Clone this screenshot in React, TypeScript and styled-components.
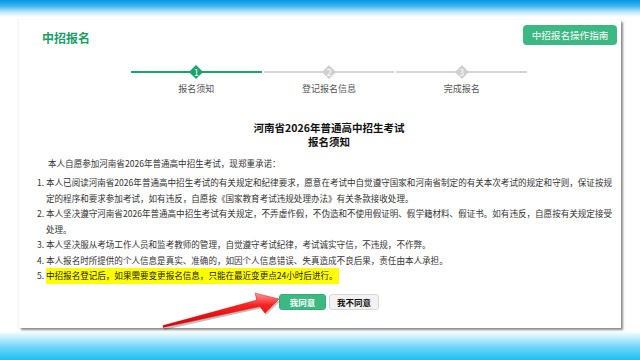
import React from "react";
import styled, { createGlobalStyle } from "styled-components";

const Global = createGlobalStyle`
  html, body { margin: 0; padding: 0; }
  body {
    width: 640px;
    height: 360px;
    overflow: hidden;
    font-family: "Noto Sans CJK SC", "Noto Sans", sans-serif;
    background: linear-gradient(
      to bottom,
      #0596df 0px,
      #3cb6ee 6px,
      #bfe7fa 12px,
      #ffffff 17px,
      #ffffff 331px,
      #c9f0fd 337px,
      #6fd6f8 347px,
      #1dbff3 360px
    );
  }
`;

const Page = styled.div`
  height: 360px;
  box-sizing: border-box;
  padding: 20px 0 0 19px;
`;

const Card = styled.div`
  position: relative;
  width: 602px;
  height: 308px;
  box-sizing: border-box;
  background: #ffffff;
  box-shadow: 2px 2px 2px rgba(0, 0, 0, 0.45), -1px 0 2px rgba(0, 0, 0, 0.06);
`;

const Header = styled.div`
  display: flex;
  justify-content: space-between;
  align-items: flex-start;
  padding: 5px 4px 0 23px;
  height: 25px;
  box-sizing: border-box;
`;

const Title = styled.div`
  padding-top: 3px;
  font-size: 12px;
  line-height: 20px;
  font-weight: 700;
  color: #1c9d68;
`;

const GuideButton = styled.button`
  width: 94px;
  height: 20px;
  border: none;
  border-radius: 4px;
  background: #3cb883;
  color: #ffffff;
  font-family: inherit;
  font-size: 9.6px;
  padding: 0;
  line-height: 20px;
`;

const Body = styled.div`
  padding-left: 18px;
  display: flex;
  flex-direction: column;
  align-items: center;
`;

const Stepper = styled.div`
  display: flex;
  gap: 2px;
  margin-top: 20px;
`;

const Step = styled.div`
  width: 130.7px;
  display: flex;
  flex-direction: column;
  align-items: center;
`;

const StepGraphic = styled.div<{ $active: boolean }>`
  position: relative;
  width: 100%;
  height: 14px;
  display: flex;
  justify-content: center;
  align-items: center;
  &::before {
    content: "";
    position: absolute;
    left: 0;
    right: 0;
    top: 6px;
    height: 2px;
    background: ${(p) => (p.$active ? "#1aa36d" : "#d4d4d4")};
  }
`;

const Marker = styled.div<{ $active: boolean }>`
  position: relative;
  width: 14px;
  height: 14px;
  display: flex;
  justify-content: center;
  align-items: center;
  color: #ffffff;
  font-size: 8.5px;
  line-height: 1;
  &::before {
    content: "";
    position: absolute;
    left: 2px;
    top: 2px;
    width: 10px;
    height: 10px;
    transform: rotate(45deg);
    background: ${(p) => (p.$active ? "#1aa36d" : "#cfcfcf")};
  }
  span {
    position: relative;
  }
`;

const StepLabel = styled.div`
  margin-top: 4px;
  font-size: 9px;
  line-height: 12px;
  color: #555555;
`;

const Heading = styled.h1`
  margin: 26px 0 0;
  font-size: 10.5px;
  line-height: 14px;
  font-weight: 700;
  color: #111111;
  text-align: center;
`;

const TextBlock = styled.div`
  align-self: stretch;
  font-size: 8.55px;
  line-height: 15.5px;
  color: #333333;
  white-space: nowrap;
`;

const Intro = styled.p`
  margin: 7px 0 0;
  padding-left: 11px;
`;

const List = styled.div`
  margin-top: 3.5px;
  display: flex;
  flex-direction: column;
`;

const Item = styled.div`
  display: flex;
`;

const Num = styled.span`
  width: 9px;
  flex: none;
`;

const Lines = styled.span`
  display: flex;
  flex-direction: column;
`;

const Highlight = styled.span`
  display: inline-block;
  background: #ffff00;
  color: #222222;
  padding-right: 1px;
`;

const Actions = styled.div`
  display: flex;
  gap: 3px;
  margin-top: 10px;
`;

const ActionButton = styled.button<{ $primary?: boolean }>`
  height: 16px;
  padding: 0;
  width: ${(p) => (p.$primary ? "47px" : "50px")};
  border-radius: 3px;
  font-family: inherit;
  font-size: 8.5px;
  font-weight: 700;
  line-height: 14px;
  border: 1px solid ${(p) => (p.$primary ? "#35ad78" : "#d8d8d8")};
  background: ${(p) => (p.$primary ? "#3cb883" : "#f3f3f3")};
  color: ${(p) => (p.$primary ? "#ffffff" : "#111111")};
`;

const ArrowLayer = styled.svg`
  position: absolute;
  left: 0;
  top: 0;
  width: 602px;
  height: 308px;
  pointer-events: none;
  overflow: visible;
`;

const steps = ["报名须知", "登记报名信息", "完成报名"];

export default function App() {
  return (
    <Page>
      <Global />
      <Card>
        <Header>
          <Title>中招报名</Title>
          <GuideButton>中招报名操作指南</GuideButton>
        </Header>
        <Body>
          <Stepper>
            {steps.map((s, i) => (
              <Step key={s}>
                <StepGraphic $active={i === 0}>
                  <Marker $active={i === 0}>
                    <span>{i + 1}</span>
                  </Marker>
                </StepGraphic>
                <StepLabel>{s}</StepLabel>
              </Step>
            ))}
          </Stepper>
          <Heading>
            河南省2026年普通高中招生考试
            <br />
            报名须知
          </Heading>
          <TextBlock>
            <Intro>本人自愿参加河南省2026年普通高中招生考试，现郑重承诺：</Intro>
            <List>
              <Item>
                <Num>1.</Num>
                <Lines>
                  <span>
                    本人已阅读河南省2026年普通高中招生考试的有关规定和纪律要求，愿意在考试中自觉遵守国家和河南省制定的有关本次考试的规定和守则，保证按规
                  </span>
                  <span>定的程序和要求参加考试，如有违反，自愿按《国家教育考试违规处理办法》有关条款接收处理。</span>
                </Lines>
              </Item>
              <Item>
                <Num>2.</Num>
                <Lines>
                  <span>
                    本人坚决遵守河南省2026年普通高中招生考试有关规定，不弄虚作假，不伪造和不使用假证明、假学籍材料、假证书。如有违反，自愿按有关规定接受
                  </span>
                  <span>处理。</span>
                </Lines>
              </Item>
              <Item>
                <Num>3.</Num>
                <Lines>
                  <span>本人坚决服从考场工作人员和监考教师的管理，自觉遵守考试纪律，考试诚实守信，不违规，不作弊。</span>
                </Lines>
              </Item>
              <Item>
                <Num>4.</Num>
                <Lines>
                  <span>本人报名时所提供的个人信息是真实、准确的，如因个人信息错误、失真造成不良后果，责任由本人承担。</span>
                </Lines>
              </Item>
              <Item>
                <Num>5.</Num>
                <Lines>
                  <span>
                    <Highlight>中招报名登记后，如果需要变更报名信息，只能在最近变更点24小时后进行。</Highlight>
                  </span>
                </Lines>
              </Item>
            </List>
          </TextBlock>
          <Actions>
            <ActionButton $primary>我同意</ActionButton>
            <ActionButton>我不同意</ActionButton>
          </Actions>
        </Body>
        <ArrowLayer viewBox="0 0 602 308">
          <defs>
            <linearGradient id="arrowFill" x1="0" y1="0" x2="0" y2="1">
              <stop offset="0" stopColor="#ff9a9a" />
              <stop offset="0.35" stopColor="#ff2020" />
              <stop offset="1" stopColor="#d40000" />
            </linearGradient>
          </defs>
          <g transform="translate(-19,-20)">
            <polygon
              points="164,328 257,302.5 255,295 280,301.5 266,315 261,308.5 164,330"
              fill="rgba(0,0,0,0.25)"
            />
            <polygon
              points="163,325.5 257,300 255,293 279,299 265,313 260,306.5 163,327.5"
              fill="url(#arrowFill)"
              stroke="#c00000"
              strokeWidth="0.4"
            />
          </g>
        </ArrowLayer>
      </Card>
    </Page>
  );
}
